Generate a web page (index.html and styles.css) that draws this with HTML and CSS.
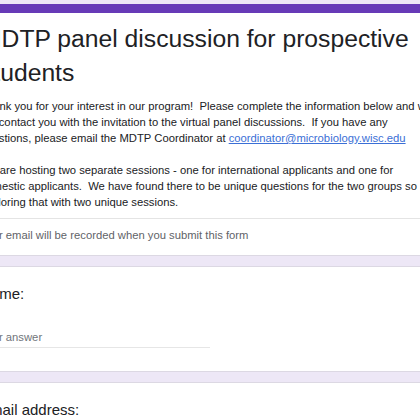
FILE: index.html
```html
<!DOCTYPE html>
<html lang="en">
<head>
<meta charset="utf-8">
<title>MDTP panel discussion for prospective students</title>
<link rel="stylesheet" href="styles.css">
</head>
<body>
<div class="form">
  <section class="card header-card">
    <h1 class="form-title">MDTP panel discussion for prospective students</h1>
    <div class="desc">
      <p>Thank you for your interest in our program!&nbsp; Please complete the information below and we<br>will contact you with the invitation to the virtual panel discussions.&nbsp; If you have any<br>questions, please email the MDTP Coordinator at <a href="#">coordinator@microbiology.wisc.edu</a></p>
      <p>We are hosting two separate sessions - one for international applicants and one for<br>domestic applicants.&nbsp; We have found there to be unique questions for the two groups so are<br>exploring that with two unique sessions.</p>
    </div>
    <div class="note">Your email will be recorded when you submit this form</div>
  </section>
  <section class="card question">
    <div class="q-title">Name:</div>
    <div class="answer">Your answer</div>
  </section>
  <section class="card question">
    <div class="q-title">Email address:</div>
  </section>
</div>
</body>
</html>
```
FILE: styles.css
```css
html, body {
  margin: 0;
  padding: 0;
}
body {
  background: #ede7f6;
  font-family: "Liberation Sans", Arial, sans-serif;
  color: #202124;
  overflow: hidden;
}
.form {
  width: 500px;
  margin-left: -45px;
  padding-top: 4px;
  display: flex;
  flex-direction: column;
  gap: 10px;
}
.card {
  background: #fff;
  border: 1px solid #dcd8e3;
  padding: 0 24px;
}
.header-card {
  border-top: 9px solid #673ab7;
  padding-top: 9px;
  padding-bottom: 12px;
}
.form-title {
  margin: 0 0 0 1px;
  font-weight: normal;
  font-size: 24.7px;
  line-height: 34px;
  width: 440px;
}
.desc {
  margin-top: 8px;
  padding-bottom: 8px;
  border-bottom: 1px solid #e4e4e4;
  font-family: "Liberation Sans", Arial, sans-serif;
  font-size: 11.25px;
  line-height: 16px;
  white-space: nowrap;
}
.desc p {
  margin: 0;
}
.desc p + p {
  margin-top: 16px;
}
.desc a {
  color: #3b6fd6;
  text-decoration: underline;
}
.note {
  margin-top: 8px;
  font-family: "Liberation Sans", Arial, sans-serif;
  font-size: 11.25px;
  line-height: 16px;
  color: #5f6368;
}
.question {
  padding-top: 17px;
  padding-bottom: 23px;
}
.q-title {
  font-size: 15px;
  line-height: 20px;
}
.answer {
  margin-top: 25px;
  width: 230px;
  padding-bottom: 2px;
  border-bottom: 1px solid #e6e6e6;
  font-family: "Liberation Sans", Arial, sans-serif;
  font-size: 11.25px;
  line-height: 16px;
  color: #70757a;
}
```
